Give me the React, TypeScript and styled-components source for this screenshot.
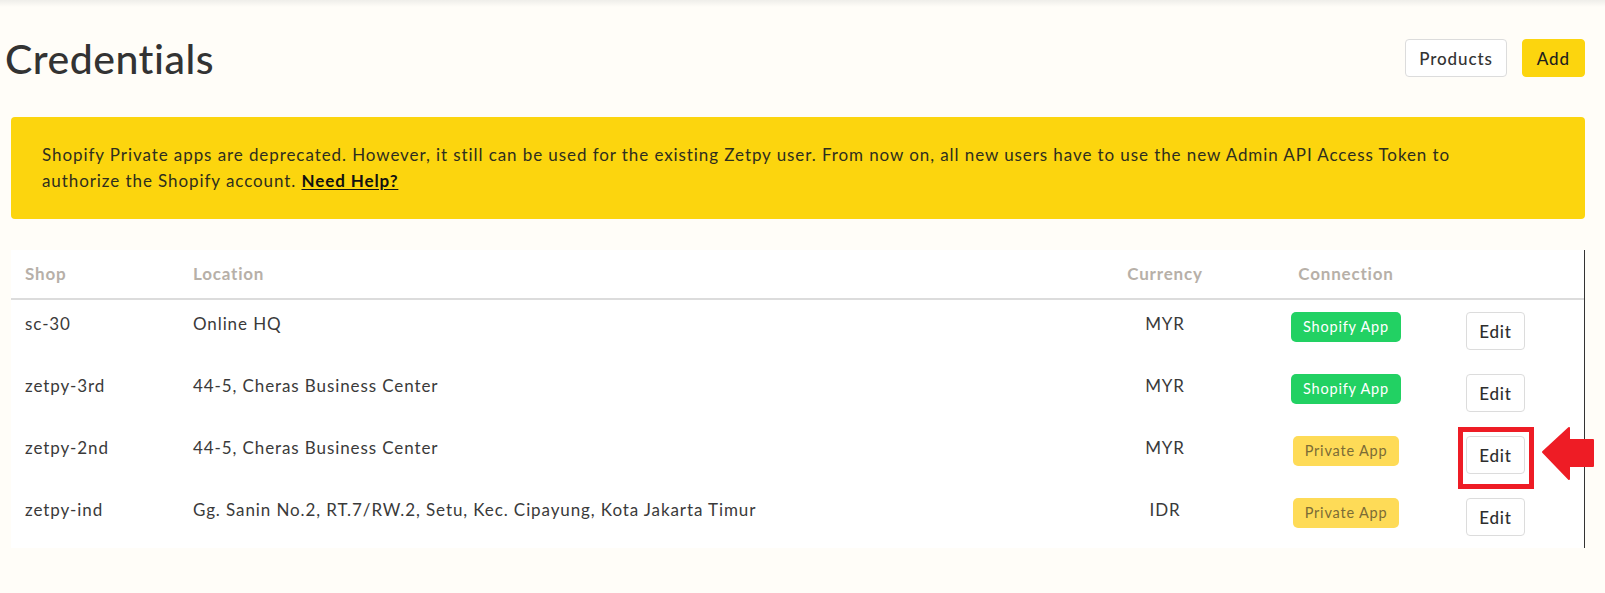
import React from "react";
import styled, { createGlobalStyle } from "styled-components";

const Global = createGlobalStyle`
  html, body {
    margin: 0;
    padding: 0;
  }
  body {
    background: linear-gradient(#efeeea 0px, #fffdf8 7px);
    background-color: #fffdf8;
    font-family: Lato, "Noto Sans", sans-serif;
    color: #333333;
    min-height: 593px;
  }
`;

const Page = styled.div`
  display: flex;
  flex-direction: column;
  padding-top: 39px;
`;

const HeaderBar = styled.div`
  display: flex;
  align-items: center;
  justify-content: space-between;
  height: 38px;
  padding: 0 20px 0 5px;
`;

const Title = styled.h1`
  margin: 0;
  font-size: 41px;
  font-weight: 500;
  letter-spacing: 0.5px;
  color: #333333;
  line-height: 1;
`;

const Actions = styled.div`
  display: flex;
  gap: 15px;
`;

const Button = styled.button<{ $primary?: boolean }>`
  height: 38px;
  padding: 0 ${(p) => (p.$primary ? "14px" : "13px")};
  border-radius: 4px;
  border: 1px solid ${(p) => (p.$primary ? "#fcd50e" : "#dcdcdc")};
  background: ${(p) => (p.$primary ? "#fcd50e" : "#ffffff")};
  color: ${(p) => (p.$primary ? "#1e1e1e" : "#333333")};
  font-family: Lato, "Noto Sans", sans-serif;
  font-size: 17px;
  font-weight: 500;
  letter-spacing: 0.9px;
  cursor: pointer;
`;

const Banner = styled.div`
  margin: 40px 20px 0 11px;
  background: #fcd50e;
  border-radius: 4px;
  padding: 25px 31px;
  font-size: 17px;
  line-height: 26px;
  letter-spacing: 0.92px;
  color: #2e2e1e;
  white-space: nowrap;
`;

const HelpLink = styled.a`
  color: #111111;
  font-weight: 700;
  letter-spacing: 0.9px;
  text-decoration: underline;
  text-underline-offset: 2px;
`;

const Table = styled.div`
  margin: 31px 20px 0 11px;
  background: #ffffff;
  border-right: 1px solid #333333;
  display: flex;
  flex-direction: column;
`;

const Row = styled.div<{ $head?: boolean }>`
  display: grid;
  grid-template-columns: 168px 925px 122px 240px 1fr;
  border-bottom: ${(p) => (p.$head ? "2px solid #dcdcdc" : "none")};
`;

const Cell = styled.div<{ $align?: "left" | "center"; $head?: boolean; $pad?: string }>`
  padding: 12px ${(p) => p.$pad ?? "14px"};
  text-align: ${(p) => p.$align ?? "left"};
  font-size: 17px;
  line-height: 24px;
  letter-spacing: ${(p) => (p.$head ? "0.8px" : "0.9px")};
  font-weight: ${(p) => (p.$head ? 700 : 400)};
  color: ${(p) => (p.$head ? "#b7b0a8" : "#3a3a3a")};
  white-space: nowrap;
`;

const ActionCell = styled.div`
  padding: 12px 0;
  position: relative;
`;

const Badge = styled.span<{ $kind: "shopify" | "private" }>`
  display: inline-flex;
  align-items: center;
  justify-content: center;
  height: 30px;
  padding: 0 12px;
  border-radius: 5px;
  font-size: 14.5px;
  letter-spacing: 0.8px;
  line-height: 1;
  vertical-align: top;
  background: ${(p) => (p.$kind === "shopify" ? "#22d163" : "#fedb57")};
  color: ${(p) => (p.$kind === "shopify" ? "#ffffff" : "#7b6c36")};
`;

const EditButton = styled.button`
  position: relative;
  height: 38px;
  width: 59px;
  border-radius: 4px;
  border: 1px solid #dcdcdc;
  background: #ffffff;
  color: #2e2e2e;
  font-family: Lato, "Noto Sans", sans-serif;
  font-size: 17px;
  font-weight: 500;
  letter-spacing: 0.8px;
  cursor: pointer;
  display: block;
`;

const Highlight = styled.span`
  position: absolute;
  left: -9px;
  top: -10px;
  width: 76px;
  height: 62px;
  box-sizing: border-box;
  border: 5px solid #ee1c25;
  pointer-events: none;
`;

const Arrow = styled.svg`
  position: absolute;
  left: 76px;
  top: -9px;
  width: 50px;
  height: 51px;
  overflow: visible;
`;

type Shop = {
  shop: string;
  location: string;
  currency: string;
  kind: "shopify" | "private";
  marked?: boolean;
};

const shops: Shop[] = [
  { shop: "sc-30", location: "Online HQ", currency: "MYR", kind: "shopify" },
  { shop: "zetpy-3rd", location: "44-5, Cheras Business Center", currency: "MYR", kind: "shopify" },
  { shop: "zetpy-2nd", location: "44-5, Cheras Business Center", currency: "MYR", kind: "private", marked: true },
  {
    shop: "zetpy-ind",
    location: "Gg. Sanin No.2, RT.7/RW.2, Setu, Kec. Cipayung, Kota Jakarta Timur",
    currency: "IDR",
    kind: "private",
  },
];

export default function App() {
  return (
    <>
      <Global />
      <Page>
        <HeaderBar>
          <Title>Credentials</Title>
          <Actions>
            <Button>Products</Button>
            <Button $primary>Add</Button>
          </Actions>
        </HeaderBar>
        <Banner>
          Shopify Private apps are deprecated. However, it still can be used for the existing Zetpy user. From now on, all new users have to use the new Admin API Access Token to
          <br />
          authorize the Shopify account. <HelpLink href="#">Need Help?</HelpLink>
        </Banner>
        <Table>
          <Row $head>
            <Cell $head>Shop</Cell>
            <Cell $head>Location</Cell>
            <Cell $head $align="center">Currency</Cell>
            <Cell $head $align="center">Connection</Cell>
            <Cell $head />
          </Row>
          {shops.map((s) => (
            <Row key={s.shop}>
              <Cell>{s.shop}</Cell>
              <Cell>{s.location}</Cell>
              <Cell $align="center">{s.currency}</Cell>
              <Cell $align="center" $pad="0px">
                <Badge $kind={s.kind}>{s.kind === "shopify" ? "Shopify App" : "Private App"}</Badge>
              </Cell>
              <ActionCell>
                <EditButton>
                  Edit
                  {s.marked && <Highlight />}
                  {s.marked && (
                    <Arrow viewBox="0 0 50 51">
                      <polygon
                        points="0,24 26,0 26,12 50,12 50,38 26,38 26,51"
                        fill="#ee1c25"
                        stroke="#ee1c25"
                        strokeWidth="2"
                        strokeLinejoin="round"
                      />
                    </Arrow>
                  )}
                </EditButton>
              </ActionCell>
            </Row>
          ))}
        </Table>
      </Page>
    </>
  );
}
